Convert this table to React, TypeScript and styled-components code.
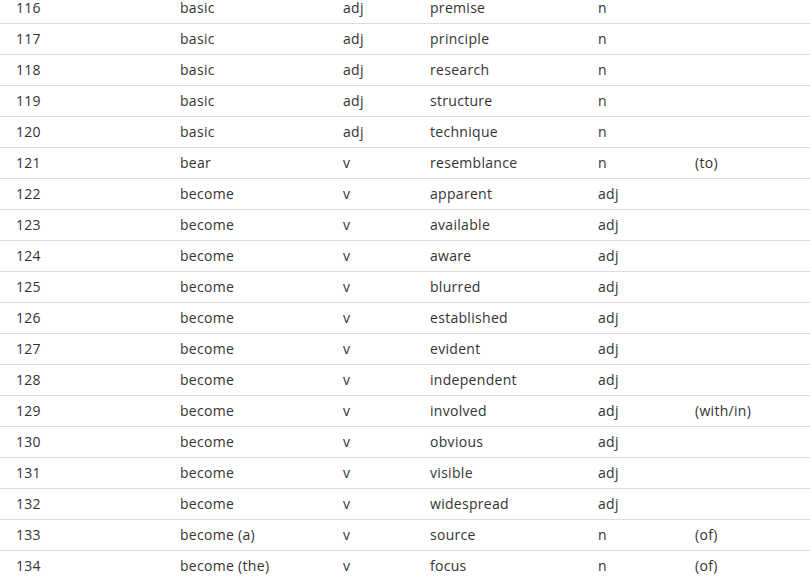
import React from 'react'
import styled, { createGlobalStyle } from 'styled-components'

interface Entry {
  id: number;
  verb: string;
  verbPos: string;
  word: string;
  wordPos: string;
  prep?: string;
}

const rows: Entry[] = [
  { id: 116, verb: 'basic', verbPos: 'adj', word: 'premise', wordPos: 'n' },
  { id: 117, verb: 'basic', verbPos: 'adj', word: 'principle', wordPos: 'n' },
  { id: 118, verb: 'basic', verbPos: 'adj', word: 'research', wordPos: 'n' },
  { id: 119, verb: 'basic', verbPos: 'adj', word: 'structure', wordPos: 'n' },
  { id: 120, verb: 'basic', verbPos: 'adj', word: 'technique', wordPos: 'n' },
  { id: 121, verb: 'bear', verbPos: 'v', word: 'resemblance', wordPos: 'n', prep: '(to)' },
  { id: 122, verb: 'become', verbPos: 'v', word: 'apparent', wordPos: 'adj' },
  { id: 123, verb: 'become', verbPos: 'v', word: 'available', wordPos: 'adj' },
  { id: 124, verb: 'become', verbPos: 'v', word: 'aware', wordPos: 'adj' },
  { id: 125, verb: 'become', verbPos: 'v', word: 'blurred', wordPos: 'adj' },
  { id: 126, verb: 'become', verbPos: 'v', word: 'established', wordPos: 'adj' },
  { id: 127, verb: 'become', verbPos: 'v', word: 'evident', wordPos: 'adj' },
  { id: 128, verb: 'become', verbPos: 'v', word: 'independent', wordPos: 'adj' },
  { id: 129, verb: 'become', verbPos: 'v', word: 'involved', wordPos: 'adj', prep: '(with/in)' },
  { id: 130, verb: 'become', verbPos: 'v', word: 'obvious', wordPos: 'adj' },
  { id: 131, verb: 'become', verbPos: 'v', word: 'visible', wordPos: 'adj' },
  { id: 132, verb: 'become', verbPos: 'v', word: 'widespread', wordPos: 'adj' },
  { id: 133, verb: 'become (a)', verbPos: 'v', word: 'source', wordPos: 'n', prep: '(of)' },
  { id: 134, verb: 'become (the)', verbPos: 'v', word: 'focus', wordPos: 'n', prep: '(of)' },
]

const GlobalStyle = createGlobalStyle`
  html, body {
    margin: 0;
    padding: 0;
    background: #FFFFFF;
    overflow: hidden;
  }
`;

export default function App() {
  return (
    <>
      <GlobalStyle />
      <Table>
        {rows.map((r) => (
          <Row key={r.id}>
            <Cell>{r.id}</Cell>
            <Cell>{r.verb}</Cell>
            <Cell>{r.verbPos}</Cell>
            <Cell>{r.word}</Cell>
            <Cell>{r.wordPos}</Cell>
            <Cell>{r.prep ?? ''}</Cell>
          </Row>
        ))}
      </Table>
    </>
  )
}

// the list is scrolled, so the first row sits partly above the window
const Table = styled.div`
  display: flex;
  flex-direction: column;
  width: 810px;
  margin-top: -7px;
  font-family: "Open Sans", "Noto Sans", sans-serif;
  font-size: 14px;
  letter-spacing: 0.3px;
  color: #333333;
`;

const Row = styled.div`
  display: grid;
  grid-template-columns: 164px 163px 87px 168px 97px 1fr;
  height: 30px;
  align-items: center;
  border-bottom: 1px solid #DDDDDD;
`;

const Cell = styled.div`
  padding-left: 16px;
  white-space: nowrap;
  line-height: 20px;
`;
